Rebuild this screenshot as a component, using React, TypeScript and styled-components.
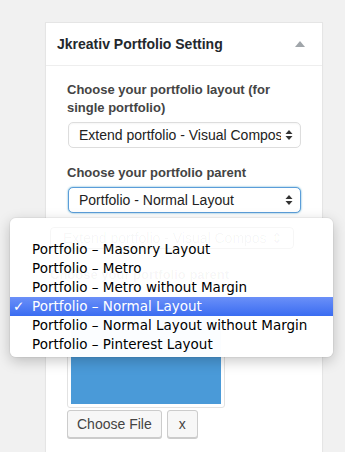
import React from 'react';
import styled, { createGlobalStyle } from 'styled-components';

const GlobalStyle = createGlobalStyle`
  html, body {
    margin: 0;
    padding: 0;
    background: #f1f1f1;
    font-family: "Liberation Sans", Arial, sans-serif;
    overflow: hidden;
  }
`;

const Page = styled.div`
  position: relative;
  height: 452px;
  padding: 22px 22px 0 45px;
  box-sizing: border-box;
`;

const Panel = styled.div`
  background: #fff;
  border: 1px solid #e5e5e5;
  border-bottom: none;
  height: 440px;
  box-sizing: border-box;
  box-shadow: 0 1px 1px rgba(0, 0, 0, 0.04);
`;

const Header = styled.div`
  display: flex;
  align-items: center;
  justify-content: space-between;
  height: 42px;
  padding: 0 17px 0 11px;
  border-bottom: 1px solid #eee;
`;

const Title = styled.h2`
  margin: 0;
  font-size: 14px;
  font-weight: 700;
  color: #23282d;
`;

const Toggle = styled.span`
  width: 0;
  height: 0;
  border-left: 5px solid transparent;
  border-right: 5px solid transparent;
  border-bottom: 6px solid #a0a5aa;
`;

const Body = styled.div`
  padding: 15px 21px 0 21px;
  display: flex;
  flex-direction: column;
`;

const Label = styled.label`
  display: block;
  font-size: 13px;
  font-weight: 700;
  line-height: 18px;
  color: #444;
  margin-bottom: 5px;
`;

const Field = styled.div`
  margin-bottom: 16px;
`;

const SelectBox = styled.div<{ $focused?: boolean }>`
  display: flex;
  align-items: center;
  justify-content: space-between;
  height: 26px;
  box-sizing: border-box;
  padding: 0 7px 0 10px;
  margin-left: 1px;
  border: 1px solid ${(p) => (p.$focused ? '#5b9dd9' : '#ddd')};
  border-radius: 5px;
  box-shadow: ${(p) => (p.$focused ? '0 0 2px rgba(30, 140, 190, 0.8)' : 'inset 0 1px 2px rgba(0,0,0,0.04)')};
  background: #fff;
  font-size: 14px;
  color: #222;
  white-space: nowrap;
  overflow: hidden;
`;

const SelectText = styled.span`
  overflow: hidden;
  flex: 1;
`;

const Arrows = styled.svg`
  flex: none;
  margin-left: 4px;
`;

const Preview = styled.div`
  width: 158px;
  height: 100px;
  margin-top: 79px;
  box-sizing: border-box;
  border: 1px solid #e2e2e2;
  border-radius: 3px;
  padding: 3px;
`;

const PreviewFill = styled.div`
  height: 100%;
  background: #4a9ad8;
`;

const Buttons = styled.div`
  display: flex;
  gap: 5px;
  margin-top: 2px;
`;

const Button = styled.button<{ $pad: number }>`
  height: 28px;
  padding: 0 ${(p) => p.$pad}px;
  font-family: "Liberation Sans", Arial, sans-serif;
  font-size: 14px;
  color: #444;
  background: #f7f7f7;
  border: 1px solid #ccc;
  border-radius: 3px;
  box-shadow: 0 1px 0 #ccc;
`;

const Menu = styled.div`
  position: absolute;
  left: 10px;
  top: 218px;
  width: 323px;
  height: 139px;
  box-sizing: border-box;
  padding-top: 22px;
  background: rgba(255, 255, 255, 0.98);
  border-radius: 6px;
  box-shadow: 0 4px 14px rgba(0, 0, 0, 0.22), 0 0 0 1px rgba(0, 0, 0, 0.04);
  overflow: hidden;
  font-family: "DejaVu Sans", "Liberation Sans", sans-serif;
`;

const Ghost = styled.div`
  position: absolute;
  left: 40px;
  top: 9px;
  width: 230px;
  height: 20px;
  border: 1px solid rgba(0, 0, 0, 0.035);
  border-radius: 4px;
  color: rgba(0, 0, 0, 0.045);
  font-family: "Liberation Sans", Arial, sans-serif;
  font-size: 14px;
  line-height: 20px;
  padding-left: 12px;
`;

const GhostLabel = styled.div`
  position: absolute;
  left: 40px;
  top: 49px;
  color: rgba(0, 0, 0, 0.045);
  font-family: "Liberation Sans", Arial, sans-serif;
  font-size: 13px;
  font-weight: 700;
`;

const Item = styled.div<{ $active?: boolean }>`
  position: relative;
  height: 19px;
  line-height: 19px;
  padding-left: 22px;
  font-size: 13.5px;
  color: ${(p) => (p.$active ? '#fff' : '#000')};
  background: ${(p) => (p.$active ? 'linear-gradient(#6b90f8, #3a6cf1)' : 'transparent')};
  white-space: nowrap;
`;

const Check = styled.span`
  position: absolute;
  left: 3px;
  top: 0;
  font-weight: 700;
`;

const options = [
  'Portfolio – Masonry Layout',
  'Portfolio – Metro',
  'Portfolio – Metro without Margin',
  'Portfolio – Normal Layout',
  'Portfolio – Normal Layout without Margin',
  'Portfolio – Pinterest Layout',
];

const selected = 'Portfolio – Normal Layout';

const UpDown = () => (
  <Arrows width="8" height="12" viewBox="0 0 8 12">
    <path d="M4 1 L7.5 5 H0.5 Z" fill="#333" />
    <path d="M4 11 L7.5 7 H0.5 Z" fill="#333" />
  </Arrows>
);

const App = () => (
  <>
    <GlobalStyle />
    <Page>
      <Panel>
        <Header>
          <Title>Jkreativ Portfolio Setting</Title>
          <Toggle />
        </Header>
        <Body>
          <Field>
            <Label>Choose your portfolio layout (for single portfolio)</Label>
            <SelectBox>
              <SelectText>Extend portfolio - Visual Composer</SelectText>
              <UpDown />
            </SelectBox>
          </Field>
          <Field>
            <Label>Choose your portfolio parent</Label>
            <SelectBox $focused>
              <SelectText>Portfolio - Normal Layout</SelectText>
              <UpDown />
            </SelectBox>
          </Field>
          <Preview>
            <PreviewFill />
          </Preview>
          <Buttons>
            <Button $pad={9}>Choose File</Button>
            <Button $pad={11}>x</Button>
          </Buttons>
        </Body>
      </Panel>
      <Menu>
        <Ghost>Extend portfolio - Visual Compos ⇕</Ghost>
        <GhostLabel>Choose your portfolio parent</GhostLabel>
        {options.map((o) => (
          <Item key={o} $active={o === selected}>
            {o === selected && <Check>✓</Check>}
            {o}
          </Item>
        ))}
      </Menu>
    </Page>
  </>
);

export default App;
